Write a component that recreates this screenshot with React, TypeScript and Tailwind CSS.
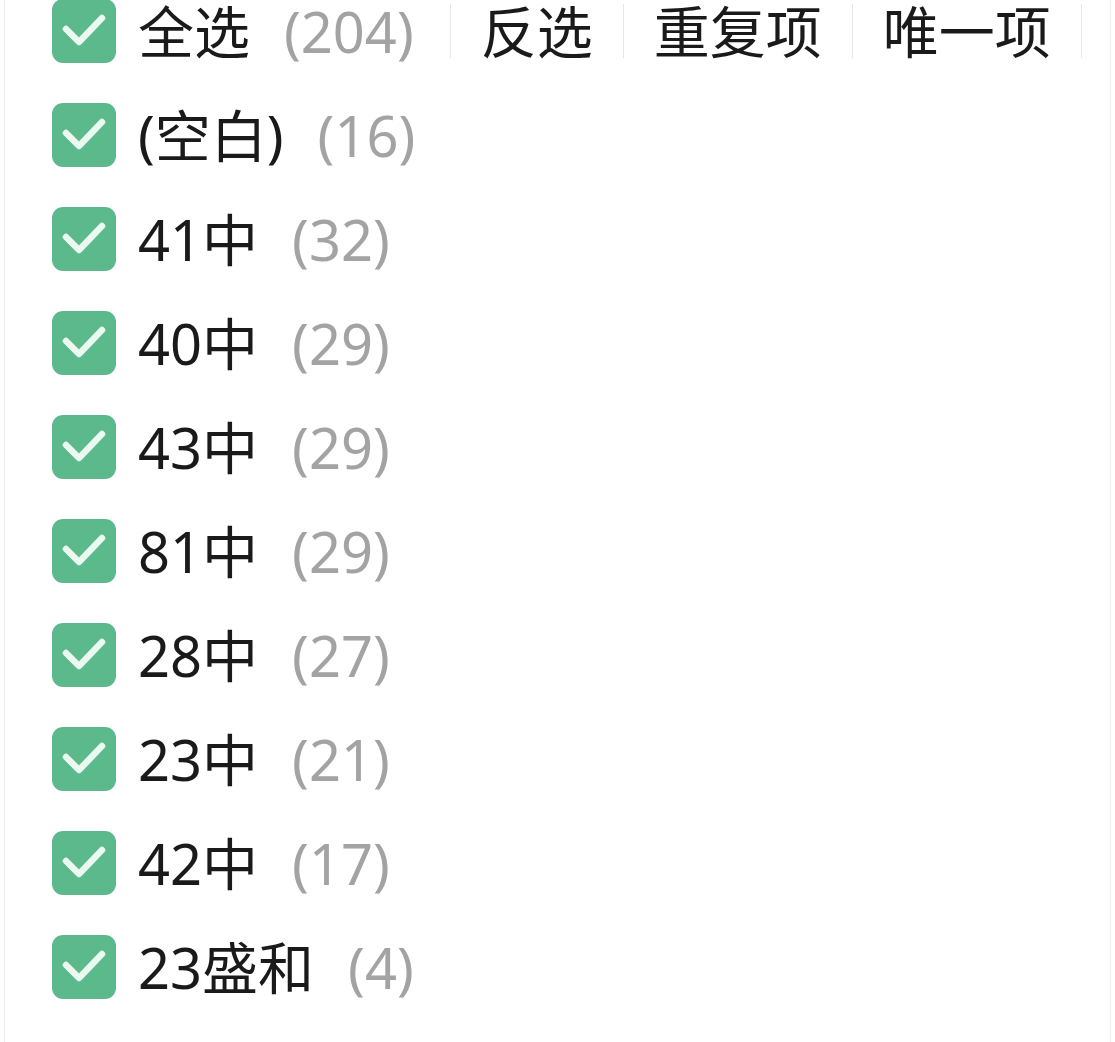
const items: { label: string; count: number }[] = [
	{ label: "(空白)", count: 16 },
	{ label: "41中", count: 32 },
	{ label: "40中", count: 29 },
	{ label: "43中", count: 29 },
	{ label: "81中", count: 29 },
	{ label: "28中", count: 27 },
	{ label: "23中", count: 21 },
	{ label: "42中", count: 17 },
	{ label: "23盛和", count: 4 },
];

function CheckBox() {
	return (
		<div className="flex h-[64px] w-[64px] shrink-0 items-center justify-center rounded-[11px] bg-[#5cb98c]">
			<svg width="64" height="64" viewBox="0 0 64 64" fill="none">
				<path d="M14 30 L27 43 L50 19" stroke="#eafaf1" strokeWidth="6.5" strokeLinecap="round" strokeLinejoin="round" />
			</svg>
		</div>
	);
}

export default function App() {
	return (
		<div
			className="h-[1042px] w-[1115px] overflow-hidden bg-white"
			style={{ fontFamily: '"Noto Sans", "Noto Sans CJK SC", sans-serif' }}
		>
			<div className="flex h-full">
				<div className="w-[5px] border-r border-[#ececec]" />
				<div className="-mt-[21px] flex flex-1 flex-col pl-[47px]">
					{/* header row */}
					<div className="flex h-[104px] items-center">
						<CheckBox />
						<span className="ml-[22px] text-[56px] leading-none text-[#1a1a1a]">全选</span>
						<span className="ml-[34px] text-[56px] leading-none text-[#a3a3a3]">(204)</span>
						<div className="ml-[36px] flex items-center">
							{["反选", "重复项", "唯一项"].map((t) => (
								<div key={t} className="flex items-center">
									<div className="h-[54px] w-px bg-[#e6e6e6]" />
									<span className="px-[30px] text-[56px] leading-none text-[#1a1a1a]">{t}</span>
								</div>
							))}
							<div className="h-[54px] w-px bg-[#e6e6e6]" />
						</div>
					</div>

					{items.map((it) => (
						<div key={it.label} className="flex h-[104px] items-center">
							<CheckBox />
							<span className="ml-[22px] text-[56px] leading-none text-[#1a1a1a]">{it.label}</span>
							<span className="ml-[34px] text-[56px] leading-none text-[#a3a3a3]">({it.count})</span>
						</div>
					))}
				</div>
				<div className="w-[5px] border-l border-[#f0f0f0]" />
			</div>
		</div>
	);
}
